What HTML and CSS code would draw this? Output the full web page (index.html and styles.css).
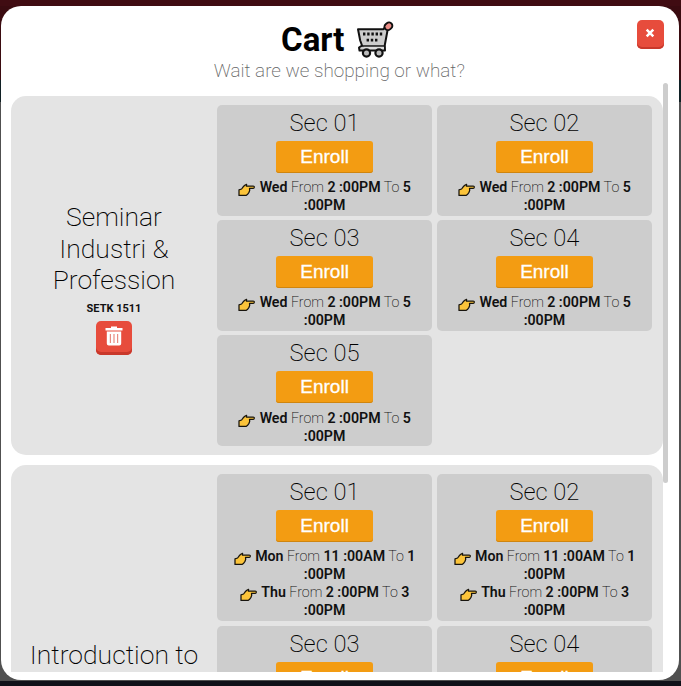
FILE: index.html
```
<!DOCTYPE html>
<html lang="en">
<head>
<meta charset="utf-8">
<title>Cart</title>
<link rel="stylesheet" href="styles.css">
</head>
<body>
<svg class="defs" width="0" height="0" aria-hidden="true">
  <symbol id="hand" viewBox="0 0 17 14">
    <path d="M1 6.8 3.6 6 5.2 3.8 6.8 2.2 8.6 1.3 8.4 3.1H15.2Q16.4 3.2 16.3 4.3 16.2 5.3 15.2 5.4H11.5L11.7 7.4 11 9.3 9.7 11.2 8 12.4H1Z" fill="#fcc43a" stroke="#17140e" stroke-width="1.25" stroke-linejoin="round"/>
  </symbol>
</svg>
<main class="modal">
  <header class="head">
    <h1>Cart
      <svg class="cart" viewBox="0 0 38 37">
        <path d="M2 8.2H27.5L30 4.5 33 2.5 36 5 31.5 9.5 28.8 24 29 29.5H3.5L3 26.5 6 24.5 4.2 19.5Z" fill="#ccc" stroke="#111" stroke-width="2" stroke-linejoin="round"/>
        <path d="M7 13H26.5M10.6 19.2H22.8" stroke="#111" stroke-width="2.8" stroke-dasharray="2.4 1.8"/>
        <path d="M5 25H28" stroke="#111" stroke-width="1.5"/>
        <path d="M8 27H28" stroke="#ddd" stroke-width="2.2"/>
        <circle cx="10.5" cy="32" r="3.6" fill="#bbb" stroke="#111" stroke-width="2.2"/>
        <circle cx="23" cy="32" r="3.6" fill="#bbb" stroke="#111" stroke-width="2.2"/>
        <path d="m31.8 5.8 1.2-1" stroke="#111" stroke-width="8.6" stroke-linecap="round"/>
        <path d="m31.8 5.8 1.2-1" stroke="#ec8e88" stroke-width="4.8" stroke-linecap="round"/>
      </svg>
    </h1>
    <p>Wait are we shopping or what?</p>
    <button class="close" aria-label="Close"><svg viewBox="0 0 10 10"><path d="m1.7 1.7 6.6 6.6m0-6.6L1.7 8.3" stroke="#fff" stroke-width="2.5"/></svg></button>
  </header>
  <div class="list">
    <article class="course">
      <div class="info">
        <h2>Seminar Industri &amp; Profession</h2>
        <b class="code">SETK 1511</b>
        <button class="trash" aria-label="Remove"><svg viewBox="0 0 18 20"><path d="M.5 2H6V.5H12V2H17.5V4.5H.5ZM1.8 5.5H16.2V17.5Q16.2 19.5 14.2 19.5H3.8Q1.8 19.5 1.8 17.5Z" fill="#fff"/><path d="M5.4 8V17M9 8V17M12.6 8V17" stroke="#e98c82" stroke-width="1.2"/></svg></button>
      </div>
      <div class="sections">
        <section><h3>Sec 01</h3><button class="enroll">Enroll</button><p><svg class="hand"><use href="#hand"/></svg> <b>Wed</b> From <b>2 :00PM</b> To <b>5<br>:00PM</b></p></section>
        <section><h3>Sec 02</h3><button class="enroll">Enroll</button><p><svg class="hand"><use href="#hand"/></svg> <b>Wed</b> From <b>2 :00PM</b> To <b>5<br>:00PM</b></p></section>
        <section><h3>Sec 03</h3><button class="enroll">Enroll</button><p><svg class="hand"><use href="#hand"/></svg> <b>Wed</b> From <b>2 :00PM</b> To <b>5<br>:00PM</b></p></section>
        <section><h3>Sec 04</h3><button class="enroll">Enroll</button><p><svg class="hand"><use href="#hand"/></svg> <b>Wed</b> From <b>2 :00PM</b> To <b>5<br>:00PM</b></p></section>
        <section><h3>Sec 05</h3><button class="enroll">Enroll</button><p><svg class="hand"><use href="#hand"/></svg> <b>Wed</b> From <b>2 :00PM</b> To <b>5<br>:00PM</b></p></section>
      </div>
    </article>
    <article class="course double">
      <div class="info"><h2>Introduction to</h2></div>
      <div class="sections">
        <section><h3>Sec 01</h3><button class="enroll">Enroll</button><p><svg class="hand"><use href="#hand"/></svg> <b>Mon</b> From <b>11 :00AM</b> To <b>1<br>:00PM</b></p><p><svg class="hand"><use href="#hand"/></svg> <b>Thu</b> From <b>2 :00PM</b> To <b>3<br>:00PM</b></p></section>
        <section><h3>Sec 02</h3><button class="enroll">Enroll</button><p><svg class="hand"><use href="#hand"/></svg> <b>Mon</b> From <b>11 :00AM</b> To <b>1<br>:00PM</b></p><p><svg class="hand"><use href="#hand"/></svg> <b>Thu</b> From <b>2 :00PM</b> To <b>3<br>:00PM</b></p></section>
        <section><h3>Sec 03</h3><button class="enroll">Enroll</button></section>
        <section><h3>Sec 04</h3><button class="enroll">Enroll</button></section>
      </div>
    </article>
  </div>
  <div class="thumb"></div>
</main>
</body>
</html>
```
FILE: styles.css
```
* { box-sizing: border-box; margin: 0; }
html, body { height: 100%; overflow: hidden; }
body {
  padding: 6px 2.5px 6px 1px;
  font-family: Roboto, "Liberation Sans", sans-serif;
  font-weight: 200;
  color: #111;
  background:
    linear-gradient(#400c12, #400c12) 0 0 / 100% 6px no-repeat,
    linear-gradient(#101119, #101119) 0 100% / 100% 5px no-repeat,
    linear-gradient(#3a0b10 0 80px, #102024 80px 102px, #505050 102px);
}
.defs { position: absolute; }
button { border: 0; padding: 0; display: flex; justify-content: center; align-items: center; }
.modal {
  position: relative;
  height: 674px;
  padding: 0 16px 8px 10px;
  border-radius: 20px;
  background: #fff;
  display: flex;
  flex-direction: column;
}
.head { height: 77px; flex: none; padding: 13px 0 0 2px; text-align: center; }
h1 {
  height: 41px;
  display: flex;
  justify-content: center;
  align-items: center;
  gap: 12px;
  font-size: 33px;
  font-weight: 700;
  color: #000;
}
.cart { width: 38px; height: 37px; }
.head p { font-size: 18.9px; line-height: 22px; padding-left: 3px; color: #666; }
.close {
  position: absolute;
  top: 14px;
  right: 14.5px;
  width: 27px;
  height: 29px;
  padding: 0 1px 3px 0;
  border-radius: 5px;
  background: #e74c3c;
  box-shadow: inset 0 -2px #c9382b;
}
.close svg { width: 10px; height: 10px; }
.list {
  flex: 1;
  min-height: 0;
  overflow: hidden;
  padding-top: 12.5px;
}
.course {
  display: flex;
  height: 359.5px;
  margin-bottom: 10px;
  padding: 9.5px 10.5px 9px 0;
  border-radius: 15px;
  background: #e4e4e4;
}
.info {
  width: 206px;
  flex: none;
  padding: 5px 15px 0;
  display: flex;
  flex-direction: column;
  align-items: center;
  justify-content: center;
  text-align: center;
}
h2 { font-size: 26.5px; line-height: 31.6px; font-weight: 200; color: #000; }
.info .code { font-size: 11px; line-height: 13px; margin: 6px 0 6px; font-weight: 700; }
.trash {
  width: 36px;
  height: 34px;
  padding-bottom: 4px;
  border-radius: 5px;
  background: #e74c3c;
  box-shadow: inset 0 -3px #c9382b;
}
.trash svg { width: 18px; height: 20px; }
.sections {
  flex: 1;
  display: grid;
  grid-template-columns: 1fr 1fr;
  grid-auto-rows: 110.5px;
  gap: 4.7px;
}
section {
  padding-top: 4px;
  border-radius: 5px;
  background: #cdcdcd;
  text-align: center;
}
h3 { font-size: 23.7px; line-height: 28px; font-weight: 200; color: #000; }
.enroll {
  width: 97px;
  height: 32px;
  margin: 4px auto 6.3px;
  border-radius: 3px;
  background: #f39c12;
  box-shadow: inset 0 -1px #cf850f;
  color: #fff;
  font: 19px/32px "Liberation Sans", sans-serif;
  -webkit-text-stroke: .3px #fff;
}
section p { font-size: 14.2px; line-height: 17.8px; white-space: nowrap; }
section b { font-weight: 600; }
.hand { width: 17px; height: 14px; margin-right: 1px; vertical-align: -5px; }
.double { height: 700px; padding-top: 9px; }
.double .sections { grid-auto-rows: 147px; }
.double .info { justify-content: flex-start; padding: 165px 0 0; }
.thumb {
  position: absolute;
  left: 662px;
  top: 77px;
  width: 5px;
  height: 400px;
  border-radius: 3px;
  background: #cdcdcd;
}
```
